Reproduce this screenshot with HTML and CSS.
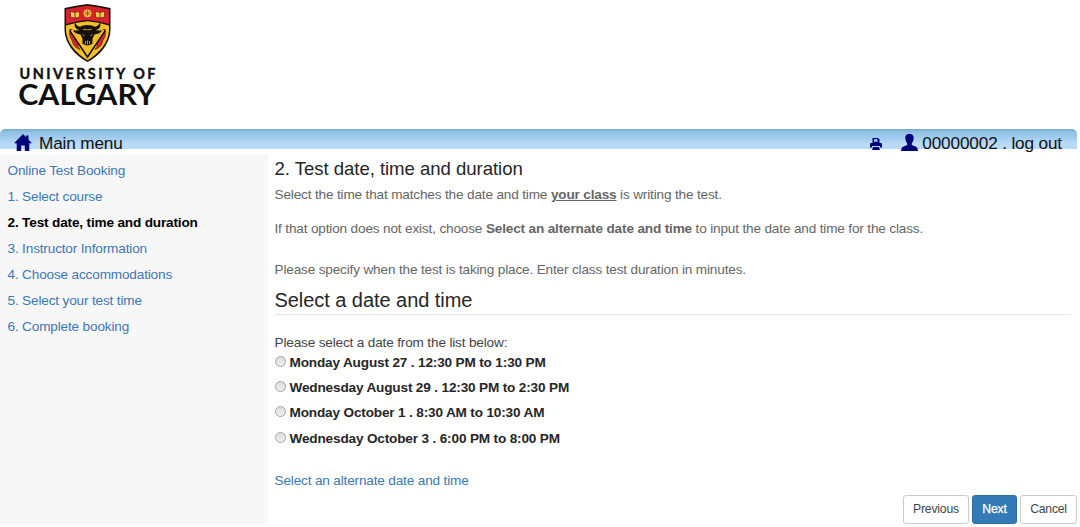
FILE: index.html
```html
<!DOCTYPE html>
<html lang="en">
<head>
<meta charset="utf-8">
<title>Online Test Booking</title>
<link rel="stylesheet" href="styles.css">
</head>
<body>
<header class="masthead">
  <svg class="logo" width="180" height="115" viewBox="0 0 180 115" role="img" aria-label="University of Calgary">
    <path d="M64.500 8Q76 5.500 87.500 4Q99 5.500 110.500 8V29C110.500 44 99 56 87.500 62C76 56 64.500 44 64.500 29V8Z" fill="#17120f"/>
    <path d="M66 9.500Q77 7 87.500 5.800Q98 7 109 9.500V24Q98 21 87.500 19.800Q77 21 66 24Z" fill="#d6222b"/>
    <path d="M66 25.500Q77 22.200 87.500 21.200Q98 22.200 109 25.500V29C109 43 98 54 87.500 60.200C77 54 66 43 66 29Z" fill="#f4c02c"/>
    <path d="M70.500 11.500l4.500 1 4.500-1v5.500l-4.500 1-4.500-1zM95.500 11.500l4.500 1 4.500-1v5.500l-4.500 1-4.500-1z" fill="#f7cb4b" stroke="#5a1812" stroke-width=".6"/>
    <path d="M75 12.500V18M100 12.500V18" stroke="#5a1812" stroke-width=".8"/>
    <circle cx="87.500" cy="13.300" r="3.900" fill="#f4c340"/>
    <path d="M87.500 10.300v6M84.800 11.800l5.400 3M84.800 14.800l5.400-3" stroke="#9c3518" stroke-width=".7"/>
    <path d="M70 29q2.500 1 2.500 5 4.500 4 5 8.500 0 4.500 2.500 7-7-2.500-8-9.500-3.500-4-2-11zM105 29q-2.500 1-2.500 5-4.500 4-5 8.500 0 4.500-2.500 7 7-2.500 8-9.500 3.500-4 2-11z" fill="#d6222b" stroke="#5a1812" stroke-width=".7"/>
    <path d="M70.500 30L87.500 55.500 104.500 30" fill="none" stroke="#17120f" stroke-width="3.200"/>
    <path d="M71.500 30L87.500 53.500 103.500 30" fill="none" stroke="#f4c02c" stroke-width="2.200"/>
    <path d="M75.500 21.500q-.5 4 4.500 5.200 2.500-1.700 7.500-1.700t7.500 1.700q5-1.200 4.500-5.200 3 7-4 8.700l6.500 .3q-2 3.500-7.500 4l-2 4.500v4.500q-5 4-10 0V39l-2-4.500q-5.500-.5-7.500-4l6.500-.3q-7-1.700-4-8.700z" fill="#17120f"/>
    <path d="M83 29.300q4.500 1 9 0M82.500 34.500l2 1.200M92.500 34.500l-2 1.200M85.500 41v3M89.500 41v3M87.500 40.500v4" fill="none" stroke="#e5b32a" stroke-width=".8"/>
    <text class="logo-top" x="19.500" y="79.300" textLength="136" lengthAdjust="spacing">UNIVERSITY OF</text>
    <text class="logo-bottom" x="18.200" y="104.500" textLength="137.500" lengthAdjust="spacingAndGlyphs">CALGARY</text>
  </svg>
</header>
<nav class="topbar">
  <a class="home"><svg width="18" height="17" viewBox="0 0 18 17"><path d="M9 0L18 9.300H15.300V17H10.800V11.500H7.200V17H2.700V9.300H0L9 0L12 3V1.500H14.500V6" fill="#00007c"/></svg><span>Main menu</span></a>
  <div class="account">
    <svg class="printer" width="12" height="12" viewBox="0 0 12 12"><path d="M2.500 0h5.500l1.500 1.500V5h-7V0z" fill="#00007c"/><path d="M4 1.200h3.500v2.600H4z" fill="#9cc7ea"/><path d="M0 6q0-1 1-1h10q1 0 1 1v3.500h-2V8H2v1.500H0zM3 9h6l1 3H2z" fill="#00007c"/></svg>
    <svg class="person" width="17" height="17" viewBox="0 0 17 17"><path d="M8.500 0C12 0 13 2 12.600 5C12.300 7.500 11.300 8.500 10.800 9.500V11L15.500 13Q16.800 13.800 17 17H0Q.2 13.800 1.500 13L6.200 11V9.500C5.700 8.500 4.700 7.500 4.400 5C4 2 5 0 8.500 0Z" fill="#00007c"/></svg>
    <span>00000002 . log out</span>
  </div>
</nav>
<div class="columns">
  <aside class="steps">
    <a>Online Test Booking</a>
    <a>1. Select course</a>
    <a class="current">2. Test date, time and duration</a>
    <a>3. Instructor Information</a>
    <a>4. Choose accommodations</a>
    <a>5. Select your test time</a>
    <a>6. Complete booking</a>
  </aside>
  <main class="content">
    <h1>2. Test date, time and duration</h1>
    <p class="intro">Select the time that matches the date and time <b><u>your class</u></b> is writing the test.</p>
    <p class="hint">If that option does not exist, choose <b>Select an alternate date and time</b> to input the date and time for the class.</p>
    <p class="note">Please specify when the test is taking place. Enter class test duration in minutes.</p>
    <h2>Select a date and time</h2>
    <p class="prompt">Please select a date from the list below:</p>
    <div class="options">
      <label><input type="radio" name="date"><span>Monday August 27 . 12:30 PM to 1:30 PM</span></label>
      <label><input type="radio" name="date"><span>Wednesday August 29 . 12:30 PM to 2:30 PM</span></label>
      <label><input type="radio" name="date"><span>Monday October 1 . 8:30 AM to 10:30 AM</span></label>
      <label><input type="radio" name="date"><span>Wednesday October 3 . 6:00 PM to 8:00 PM</span></label>
    </div>
    <a class="alternate">Select an alternate date and time</a>
    <div class="actions">
      <button class="previous">Previous</button>
      <button class="next">Next</button>
      <button class="cancel">Cancel</button>
    </div>
  </main>
</div>
</body>
</html>
```

FILE: styles.css
```css
* { box-sizing: border-box; }
body { margin: 0; height: 527px; overflow: hidden; background: #fff; font-family: "Liberation Sans", Arial, sans-serif; font-size: 13.6px; letter-spacing: -.165px; color: #333; }
h1, h2, p { margin: 0; font-weight: 400; }
.masthead { height: 129px; }
.logo { display: block; letter-spacing: 0; }
.logo-top { font: 700 14.4px Lato, sans-serif; fill: #111; stroke: #111; stroke-width: .4px; }
.logo-bottom { font: 700 28.6px Lato, sans-serif; fill: #111; }
.topbar { width: 1077px; height: 20px; padding: 5px 15px 0 14px; display: flex; justify-content: space-between; border-radius: 5px 5px 0 0; background: linear-gradient(#79a9ca 0, #91c1e5 3px, #a5cff0 10px, #bbdcf8 15px, #b8daf7 100%); font-size: 17.2px; letter-spacing: -.15px; line-height: 19px; color: #111; }
.home { display: flex; gap: 7px; }
.account { display: flex; }
.printer { margin: 4px 19px 0 0; }
.person { margin-right: 4px; }
.columns { display: flex; height: 375px; margin-top: 5px; }
.steps { flex: none; width: 268px; height: 370px; padding: 4px 7.5px; background: #f7f7f7; display: flex; flex-direction: column; }
.steps a { height: 26px; line-height: 26px; color: #3d78b3; }
.steps .current { font-weight: 700; color: #000; }
.content { width: 809px; padding: 4px 0 0 6.500px; display: flex; flex-direction: column; }
h1 { font-size: 18.6px; letter-spacing: -.05px; line-height: 22px; color: #262626; }
.intro, .hint, .note { line-height: 20px; color: #666; }
.intro { margin-top: 5px; }
.hint { margin-top: 14px; }
.note { margin-top: 21px; }
h2 { width: 796px; height: 27px; margin-top: 8px; border-bottom: 1px solid #e5e5e5; font-size: 20px; letter-spacing: -.05px; line-height: 24px; color: #262626; }
.prompt { margin-top: 18px; line-height: 20px; color: #444; }
.options { display: flex; flex-direction: column; font-weight: 700; color: #262626; }
.options label { display: flex; gap: 4px; height: 25.200px; line-height: 20px; }
.options input { appearance: none; flex: none; width: 11px; height: 11px; margin: 3px 0 0; border: 1px solid #a4a4a4; border-radius: 50%; background: linear-gradient(#ddd, #efefef); }
.alternate { margin-top: 17px; line-height: 20px; color: #3d78b3; }
.actions { display: flex; gap: 3px; justify-content: flex-end; margin-top: 4px; }
.actions button { height: 29px; padding: 0; border: 1px solid #ccc; border-radius: 3px; background: #fff; font: 12.2px "Liberation Sans", Arial, sans-serif; letter-spacing: -.2px; color: #444; }
.actions .previous { width: 66px; }
.actions .next { width: 45px; background: #337ab7; border-color: #2e6da4; color: #fff; -webkit-text-stroke: .25px #fff; }
.actions .cancel { width: 57px; }
```
